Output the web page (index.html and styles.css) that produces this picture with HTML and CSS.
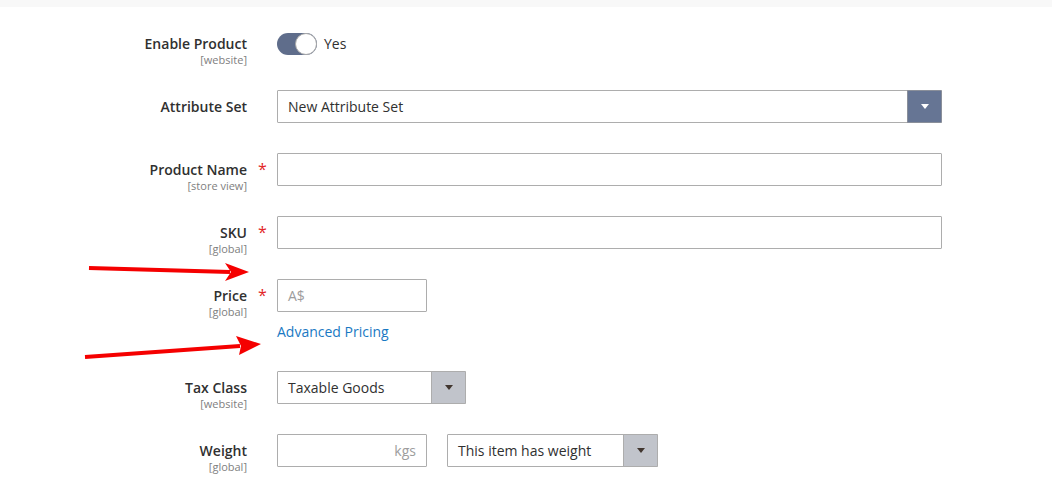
FILE: index.html
```html
<!DOCTYPE html>
<html lang="en">
<head>
    <meta charset="UTF-8">
    <title>New Product</title>
    <link rel="stylesheet" href="styles.css">
</head>
<body>
    <div class="top-bar"></div>

    <div class="product-form">
        <div class="field field-first">
            <div class="label"><span class="title">Enable Product</span><span class="scope">[website]</span></div>
            <div class="req"></div>
            <div class="control toggle-wrap">
                <span class="toggle"><span class="knob"></span></span>
                <span class="toggle-text">Yes</span>
            </div>
        </div>

        <div class="field">
            <div class="label"><span class="title">Attribute Set</span></div>
            <div class="req"></div>
            <div class="control">
                <div class="select select-wide dark">
                    <span class="value">New Attribute Set</span>
                    <span class="arrow"></span>
                </div>
            </div>
        </div>

        <div class="field">
            <div class="label"><span class="title">Product Name</span><span class="scope">[store view]</span></div>
            <div class="req">*</div>
            <div class="control"><div class="input input-wide"></div></div>
        </div>

        <div class="field">
            <div class="label"><span class="title">SKU</span><span class="scope">[global]</span></div>
            <div class="req">*</div>
            <div class="control"><div class="input input-wide"></div></div>
        </div>

        <div class="field">
            <div class="label"><span class="title">Price</span><span class="scope">[global]</span></div>
            <div class="req">*</div>
            <div class="control">
                <div class="input input-small"><span class="placeholder">A$</span></div>
                <a class="adv-link" href="#">Advanced Pricing</a>
            </div>
        </div>

        <div class="field">
            <div class="label"><span class="title">Tax Class</span><span class="scope">[website]</span></div>
            <div class="req"></div>
            <div class="control">
                <div class="select select-tax">
                    <span class="value">Taxable Goods</span>
                    <span class="arrow"></span>
                </div>
            </div>
        </div>

        <div class="field">
            <div class="label"><span class="title">Weight</span><span class="scope">[global]</span></div>
            <div class="req"></div>
            <div class="control weight-row">
                <div class="input input-small addon"><span class="unit">kgs</span></div>
                <div class="select select-weight">
                    <span class="value">This item has weight</span>
                    <span class="arrow"></span>
                </div>
            </div>
        </div>
    </div>

    <svg class="arrows" width="1052" height="477" viewBox="0 0 1052 477">
        <line x1="89" y1="268" x2="230" y2="272" stroke="#f50000" stroke-width="4"/>
        <polygon points="225,263 249,272 225,281 231,272" fill="#f50000"/>
        <line x1="85" y1="357" x2="240" y2="346" stroke="#f50000" stroke-width="4"/>
        <polygon points="236,336 261,344 239,355 241,346" fill="#f50000"/>
    </svg>
</body>
</html>
```

FILE: styles.css
```css
body { margin: 0; font-family: "Open Sans", "Liberation Sans", sans-serif; color: #303030; background: #fff; }
.top-bar { height: 7px; background: #f8f8f8; }

.product-form { display: flex; flex-direction: column; gap: 30px; padding: 19px 0 10px; }
.field { display: grid; grid-template-columns: 247px 30px 665px; align-items: start; }

.label { min-height: 33px; display: flex; flex-direction: column; align-items: flex-end; padding-top: 7px; box-sizing: border-box; margin-bottom: -10px; }
.label .title { font-size: 14px; font-weight: 600; line-height: 19px; white-space: nowrap; }
.label .scope { font-size: 11px; line-height: 13px; color: #808080; }
.field-first .label { padding-top: 8px; }

.req { color: #e22626; font-size: 16px; line-height: 33px; padding-left: 11px; }

.control { min-height: 33px; }

.toggle-wrap { display: flex; align-items: center; gap: 7px; padding-top: 1px; }
.toggle { width: 40px; height: 22px; border-radius: 11px; background: #5f6d8b; position: relative; box-sizing: border-box; }
.toggle .knob { position: absolute; right: 0; top: 0; width: 22px; height: 22px; border-radius: 50%; background: #fff; border: 1px solid #a8a8a8; box-sizing: border-box; }
.toggle-text { font-size: 14px; }

.input, .select { height: 33px; border: 1px solid #adadad; border-radius: 1px; box-sizing: border-box; display: flex; align-items: center; font-size: 14px; background: #fff; }
.input-wide { width: 665px; }
.input-small { width: 150px; }
.input .placeholder { padding-left: 10px; color: #9d9d9d; }
.addon { justify-content: flex-end; }
.addon .unit { padding-right: 10px; color: #9d9d9d; }

.select .value { flex: 1; padding-left: 10px; white-space: nowrap; }
.select .arrow { width: 33px; align-self: stretch; margin: -1px -1px -1px 0; border: 1px solid #adadad; border-radius: 0 1px 1px 0; background: #c1c4cb; display: flex; align-items: center; justify-content: center; }
.select .arrow::after { content: ""; border-left: 4px solid transparent; border-right: 4px solid transparent; border-top: 5px solid #41362f; }
.select.dark .arrow { background: #667594; border-color: #8a8f9a; }
.select.dark .arrow::after { border-top-color: #fff; }

.select-wide { width: 665px; }
.select-tax { width: 189px; }
.select-weight { width: 211px; }

.weight-row { display: flex; gap: 20px; }

.adv-link { display: block; margin-top: 11px; font-size: 14px; line-height: 18px; color: #1979c3; text-decoration: none; }

.arrows { position: absolute; left: 0; top: 0; pointer-events: none; }
```
